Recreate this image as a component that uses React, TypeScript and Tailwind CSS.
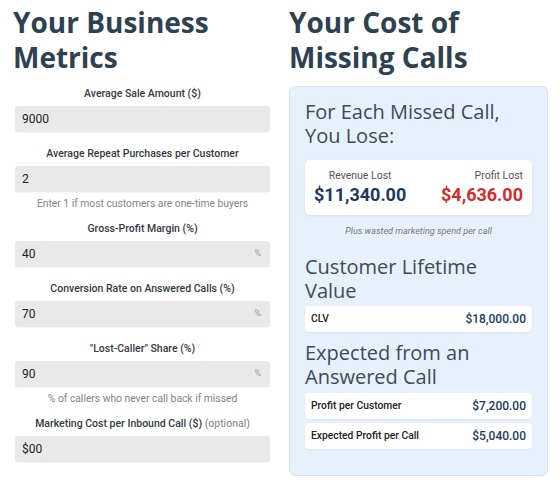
import React from "react";

const heading = { fontFamily: '"Open Sans", "DejaVu Sans", sans-serif' };

function Field({
  label,
  optional,
  value,
  suffix,
  help,
}: {
  label: string;
  optional?: boolean;
  value: string;
  suffix?: string;
  help?: string;
}) {
  return (
    <div className="flex flex-col">
      <div className="text-center text-[10.5px] font-medium leading-[14px] text-[#333b44]">
        {label}
        {optional && <span className="font-normal text-[#7a828a]"> (optional)</span>}
      </div>
      <div className="mt-[5px] flex h-[26px] items-center justify-between rounded-[3px] bg-[#e9e9e9] pl-[7px] pr-[9px] shadow-[0_1px_1px_rgba(0,0,0,0.04)]">
        <span className="text-[12px] text-[#222]">{value}</span>
        {suffix && <span className="text-[9px] text-[#9a9a9a]">{suffix}</span>}
      </div>
      {help && (
        <div className="mb-[-3px] mt-[5px] text-center text-[10.3px] leading-[13px] text-[#80868c]">{help}</div>
      )}
    </div>
  );
}

function Row({ label, value }: { label: string; value: string }) {
  return (
    <div className="flex h-[26px] items-center justify-between rounded-[4px] bg-white px-[6px] shadow-[0_1px_2px_rgba(0,0,0,0.05)]">
      <span className="text-[10.3px] font-medium text-[#222]">{label}</span>
      <span className="text-[12px] font-medium text-[#1c3a5e]">{value}</span>
    </div>
  );
}

export default function App() {
  return (
    <div
      className="flex h-[486px] w-[560px] gap-[19px] bg-white pl-[15px] pr-[12px] pt-[5px]"
      style={{ fontFamily: 'Roboto, "Liberation Sans", sans-serif' }}
    >
      <div className="flex w-[255px] flex-col">
        <h1
          className="ml-[-2px] text-[28px] font-bold leading-[35px] text-[#2e4150]"
          style={heading}
        >
          Your Business Metrics
        </h1>
        <div className="mt-[12px] flex flex-col gap-[15px]">
          <Field label="Average Sale Amount ($)" value="9000" />
          <Field
            label="Average Repeat Purchases per Customer"
            value="2"
            help="Enter 1 if most customers are one-time buyers"
          />
          <Field label="Gross-Profit Margin (%)" value="40" suffix="%" />
          <Field label="Conversion Rate on Answered Calls (%)" value="70" suffix="%" />
          <Field
            label={'"Lost-Caller" Share (%)'}
            value="90"
            suffix="%"
            help="% of callers who never call back if missed"
          />
          <Field label="Marketing Cost per Inbound Call ($)" optional value="$00" />
        </div>
      </div>

      <div className="flex w-[259px] flex-col">
        <h1
          className="ml-[0px] text-[28px] font-bold leading-[35px] text-[#2e4150]"
          style={heading}
        >
          Your Cost of Missing Calls
        </h1>
        <div className="mt-[11px] flex h-[390px] flex-col rounded-[6px] border border-[#d3e2f5] bg-[#e7f1fd] px-[15px] pt-[13px]">
          <h2
            className="max-w-[215px] text-[20px] font-normal leading-[24px] text-[#3c4a5a]"
            style={heading}
          >
            For Each Missed Call, You Lose:
          </h2>
          <div className="mt-[12px] flex h-[55px] items-center justify-between rounded-[5px] bg-white px-[9px] shadow-[0_1px_3px_rgba(0,0,0,0.08)]">
            <div className="flex flex-col items-center">
              <span className="text-[10.5px] leading-[14px] text-[#555]">Revenue Lost</span>
              <span className="text-[18px] font-bold leading-[24px] text-[#1c3a5e]">$11,340.00</span>
            </div>
            <div className="flex flex-col items-end">
              <span className="text-[10.5px] leading-[14px] text-[#555]">Profit Lost</span>
              <span className="text-[18px] font-bold leading-[24px] text-[#d62b2b]">$4,636.00</span>
            </div>
          </div>
          <div className="mt-[10px] text-center text-[9.1px] italic leading-[12px] text-[#777]">
            Plus wasted marketing spend per call
          </div>
          <h2
            className="mt-[18px] max-w-[215px] text-[20px] font-normal leading-[24px] text-[#3c4a5a]"
            style={heading}
          >
            Customer Lifetime Value
          </h2>
          <div className="mt-[3px]">
            <Row label="CLV" value="$18,000.00" />
          </div>
          <h2
            className="mt-[9px] max-w-[215px] text-[20px] font-normal leading-[24px] text-[#3c4a5a]"
            style={heading}
          >
            Expected from an Answered Call
          </h2>
          <div className="mt-[4px] flex flex-col gap-[4px]">
            <Row label="Profit per Customer" value="$7,200.00" />
            <Row label="Expected Profit per Call" value="$5,040.00" />
          </div>
        </div>
      </div>
    </div>
  );
}
